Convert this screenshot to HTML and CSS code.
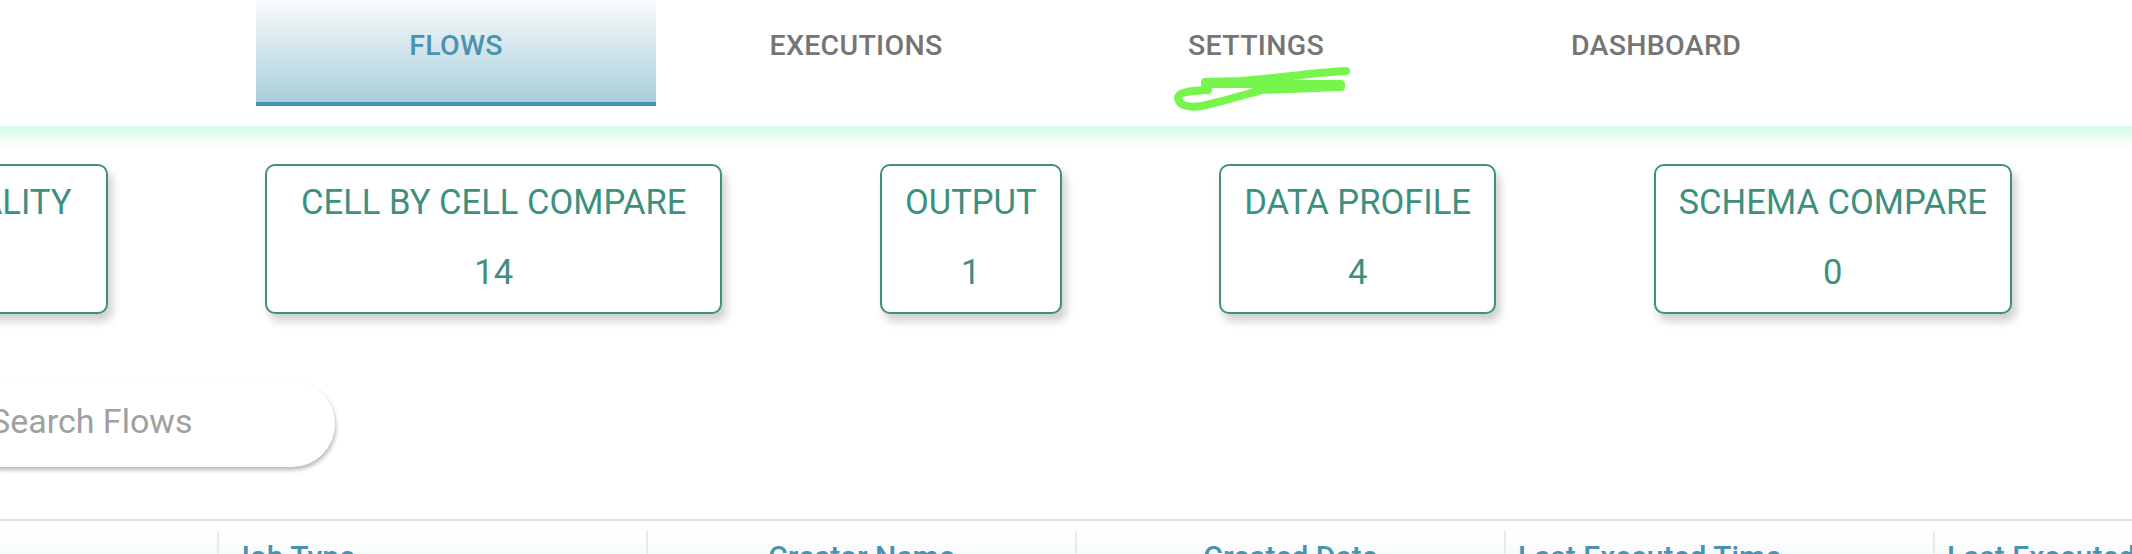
FILE: index.html
```html
<!DOCTYPE html>
<html lang="en">
<head>
<meta charset="utf-8">
<title>Flows</title>
<link rel="stylesheet" href="styles.css">
</head>
<body>
<header class="header">
  <nav class="tabs">
    <a class="tab tab--active">FLOWS</a>
    <a class="tab">EXECUTIONS</a>
    <a class="tab">SETTINGS</a>
    <a class="tab">DASHBOARD</a>
  </nav>
  <svg class="scribble" width="190" height="50" viewBox="0 0 190 50" aria-hidden="true">
    <path d="M176 7 C150 8 110 14 70 17 L35 18 L35 20 L171 20 L171 23 C140 24 112 25 92 26 C80 29 66 34 32 42 C19 44 9 42 8 34 C8 29 15 27 38 26" fill="none" stroke="#76f54c" stroke-width="8" stroke-linecap="round" stroke-linejoin="round"/>
  </svg>
</header>
<div class="header-glow"></div>

<section class="cards">
  <div class="card card--wide"><div class="card-title">DATA QUALITY</div><div class="card-count">9</div></div>
  <div class="card card--wide"><div class="card-title">CELL BY CELL COMPARE</div><div class="card-count">14</div></div>
  <div class="card"><div class="card-title">OUTPUT</div><div class="card-count">1</div></div>
  <div class="card"><div class="card-title">DATA PROFILE</div><div class="card-count">4</div></div>
  <div class="card"><div class="card-title">SCHEMA COMPARE</div><div class="card-count">0</div></div>
</section>

<div class="search-row">
  <input class="search" type="text" placeholder="Search Flows">
</div>

<div class="table">
  <div class="thead">
    <div class="th"></div>
    <div class="th th--left th--job">Job Type</div>
    <div class="th">Creator Name</div>
    <div class="th">Created Date</div>
    <div class="th th--left">Last Executed Time</div>
    <div class="th th--left">Last Executed By</div>
  </div>
</div>
</body>
</html>
```

FILE: styles.css
```css
html, body {
  margin: 0;
  padding: 0;
  overflow: hidden;
  background: #ffffff;
  font-family: Roboto, "Liberation Sans", Arial, sans-serif;
}

.header {
  position: relative;
  height: 126px;
  background: #ffffff;
}

.tabs {
  display: flex;
  padding-left: 256px;
}

.tab {
  width: 400px;
  height: 90px;
  padding-bottom: 12px;
  border-bottom: 4px solid transparent;
  display: flex;
  align-items: center;
  justify-content: center;
  font-size: 28.5px;
  font-weight: 500;
  color: #757575;
  letter-spacing: 0.3px;
}

.tab--active {
  color: #4a93b0;
  background: linear-gradient(#f8fbfc, #a9cfdb);
  border-bottom-color: #4892b0;
}

.scribble {
  position: absolute;
  left: 1170px;
  top: 64px;
}

.header-glow {
  height: 22px;
  background: linear-gradient(#d3fce8, rgba(255, 255, 255, 0));
}

.cards {
  display: flex;
  justify-content: flex-end;
  gap: 157.5px;
  padding-right: 120px;
  margin-top: 16px;
}

.card {
  flex-shrink: 0;
  display: flex;
  flex-direction: column;
  align-items: center;
  gap: 30px;
  padding: 16px 23px 20px;
  border: 2px solid #3f907f;
  border-radius: 10px;
  box-shadow: 4px 7px 10px rgba(0, 0, 0, 0.2);
  color: #3d8f7e;
  font-size: 34.6px;
  line-height: 40px;
  background: #ffffff;
}

.card--wide {
  padding-left: 34px;
  padding-right: 34px;
}

.card-title,
.card-count {
  white-space: nowrap;
}

.search-row {
  margin-top: 67px;
}

.search {
  display: block;
  margin-left: -40px;
  width: 375px;
  height: 86px;
  box-sizing: border-box;
  padding: 0 0 6px 30px;
  border: none;
  border-radius: 43px;
  box-shadow: 1px 3px 4px rgba(0, 0, 0, 0.28);
  font-family: Roboto, "Liberation Sans", Arial, sans-serif;
  font-size: 34px;
  color: #555;
  outline: none;
  background: #ffffff;
}

.search::placeholder {
  color: #a0a0a0;
}

.table {
  margin-top: 52px;
  border-top: 2px solid #e0e0e0;
  padding-top: 10px;
}

.thead {
  display: flex;
  margin-left: -212px;
  background: linear-gradient(#ffffff, #e4eff4 80px);
}

.th {
  flex: 0 0 429px;
  box-sizing: border-box;
  height: 60px;
  padding-top: 6px;
  border-left: 2px solid #e8ebed;
  text-align: center;
  font-size: 30px;
  line-height: 40px;
  font-weight: 500;
  color: #4a93b0;
  white-space: nowrap;
  overflow: hidden;
}

.th:first-child {
  border-left: none;
}

.th--left {
  text-align: left;
  padding-left: 12px;
}

.th--job {
  padding-left: 14px;
}
```
